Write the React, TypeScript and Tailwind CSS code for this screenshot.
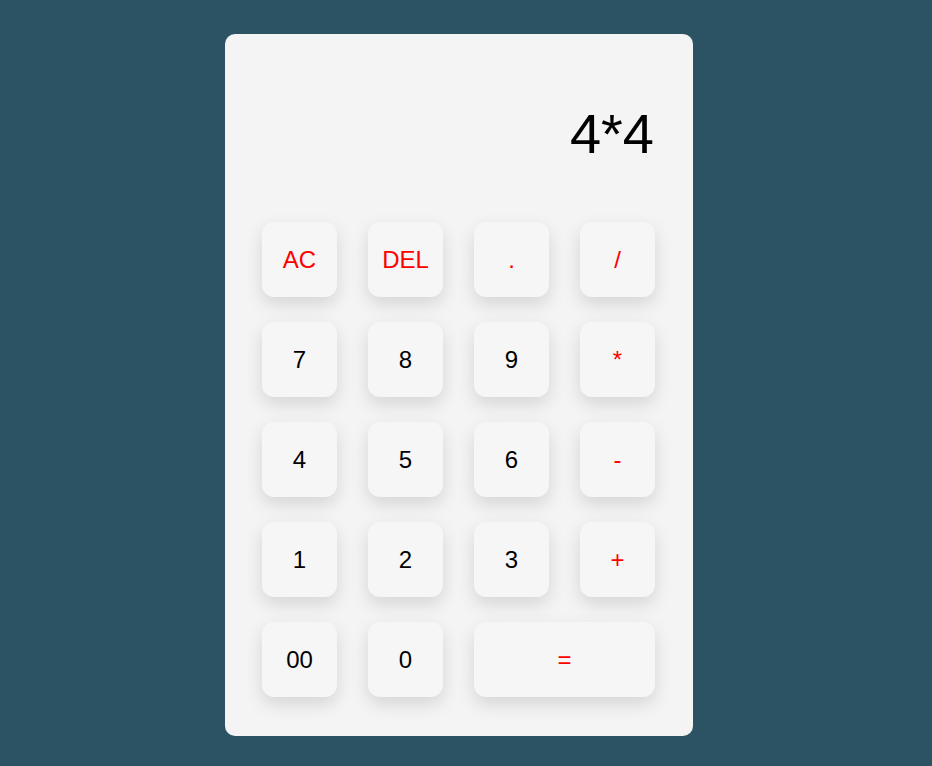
const keys: { label: string; op?: boolean; wide?: boolean }[] = [
  { label: "AC", op: true },
  { label: "DEL", op: true },
  { label: ".", op: true },
  { label: "/", op: true },
  { label: "7" },
  { label: "8" },
  { label: "9" },
  { label: "*", op: true },
  { label: "4" },
  { label: "5" },
  { label: "6" },
  { label: "-", op: true },
  { label: "1" },
  { label: "2" },
  { label: "3" },
  { label: "+", op: true },
  { label: "00" },
  { label: "0" },
  { label: "=", op: true, wide: true },
];

export default function App() {
  return (
    <div
      className="min-h-[766px] bg-[#2b5364] flex justify-center pt-[34px] pr-[14px]"
      style={{ fontFamily: '"Liberation Sans", Arial, sans-serif' }}
    >
      <div className="w-[468px] h-[702px] rounded-[10px] bg-[#f4f4f4] px-[37px]">
        <div className="pt-[72px] h-[188px] text-right pr-[2px] text-[56px] leading-none text-black">
          4*4
        </div>
        <div className="grid grid-cols-[repeat(4,75px)] gap-x-[31px] gap-y-[25px]">
          {keys.map((k) => (
            <button
              key={k.label}
              className={`h-[75px] rounded-[12px] bg-[#f6f6f6] shadow-[0_7px_18px_rgba(0,0,0,0.13)] text-[24px] flex items-center justify-center ${
                k.wide ? "col-span-2" : ""
              } ${k.op ? "text-[#ff0000]" : "text-black"}`}
            >
              {k.label}
            </button>
          ))}
        </div>
      </div>
    </div>
  );
}
